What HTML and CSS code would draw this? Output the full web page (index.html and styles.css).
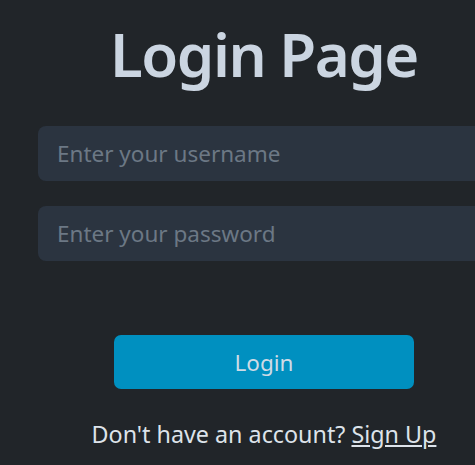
FILE: index.html
```html
<!DOCTYPE html>
<html lang="en">
<head>
    <meta charset="UTF-8">
    <meta name="viewport" content="width=device-width, initial-scale=1.0">
    <title>Login Page</title>
    <link rel="stylesheet" href="styles.css">
</head>
<body>
    <main class="login">
        <h1 class="login-title">Login Page</h1>
        <form class="login-form">
            <input type="text" class="login-input" placeholder="Enter your username">
            <input type="password" class="login-input" placeholder="Enter your password">
            <button type="submit" class="login-button">Login</button>
        </form>
        <p class="login-footer">Don't have an account? <a href="#">Sign Up</a></p>
    </main>
</body>
</html>
```

FILE: styles.css
```css
* {
    margin: 0;
    padding: 0;
    box-sizing: border-box;
}

body {
    font-family: "Noto Sans", "Open Sans", sans-serif;
    background-color: #212529;
    color: #dde3ea;
}

.login {
    width: 452px;
    margin-left: 38px;
    display: flex;
    flex-direction: column;
    align-items: center;
}

.login-title {
    font-size: 60px;
    font-weight: 600;
    letter-spacing: -1.5px;
    color: #cbd5e1;
    line-height: 1;
    margin-top: 24px;
    margin-bottom: 42px;
}

.login-form {
    width: 100%;
    display: flex;
    flex-direction: column;
    align-items: center;
    gap: 25px;
}

.login-input {
    width: 100%;
    height: 55px;
    padding: 0 19px;
    border: none;
    border-radius: 8px;
    background-color: #2b3440;
    color: #dde3ea;
    font-family: inherit;
    font-size: 22.5px;
}

.login-input::placeholder {
    color: #6c7885;
}

.login-button {
    width: 300px;
    height: 54px;
    margin-top: 49px;
    border: none;
    border-radius: 7px;
    background-color: #0090c0;
    color: #cfdbe6;
    font-family: inherit;
    font-size: 22.5px;
    cursor: pointer;
}

.login-footer {
    margin-top: 29px;
    font-size: 23.3px;
}

.login-footer a {
    color: inherit;
}
```
